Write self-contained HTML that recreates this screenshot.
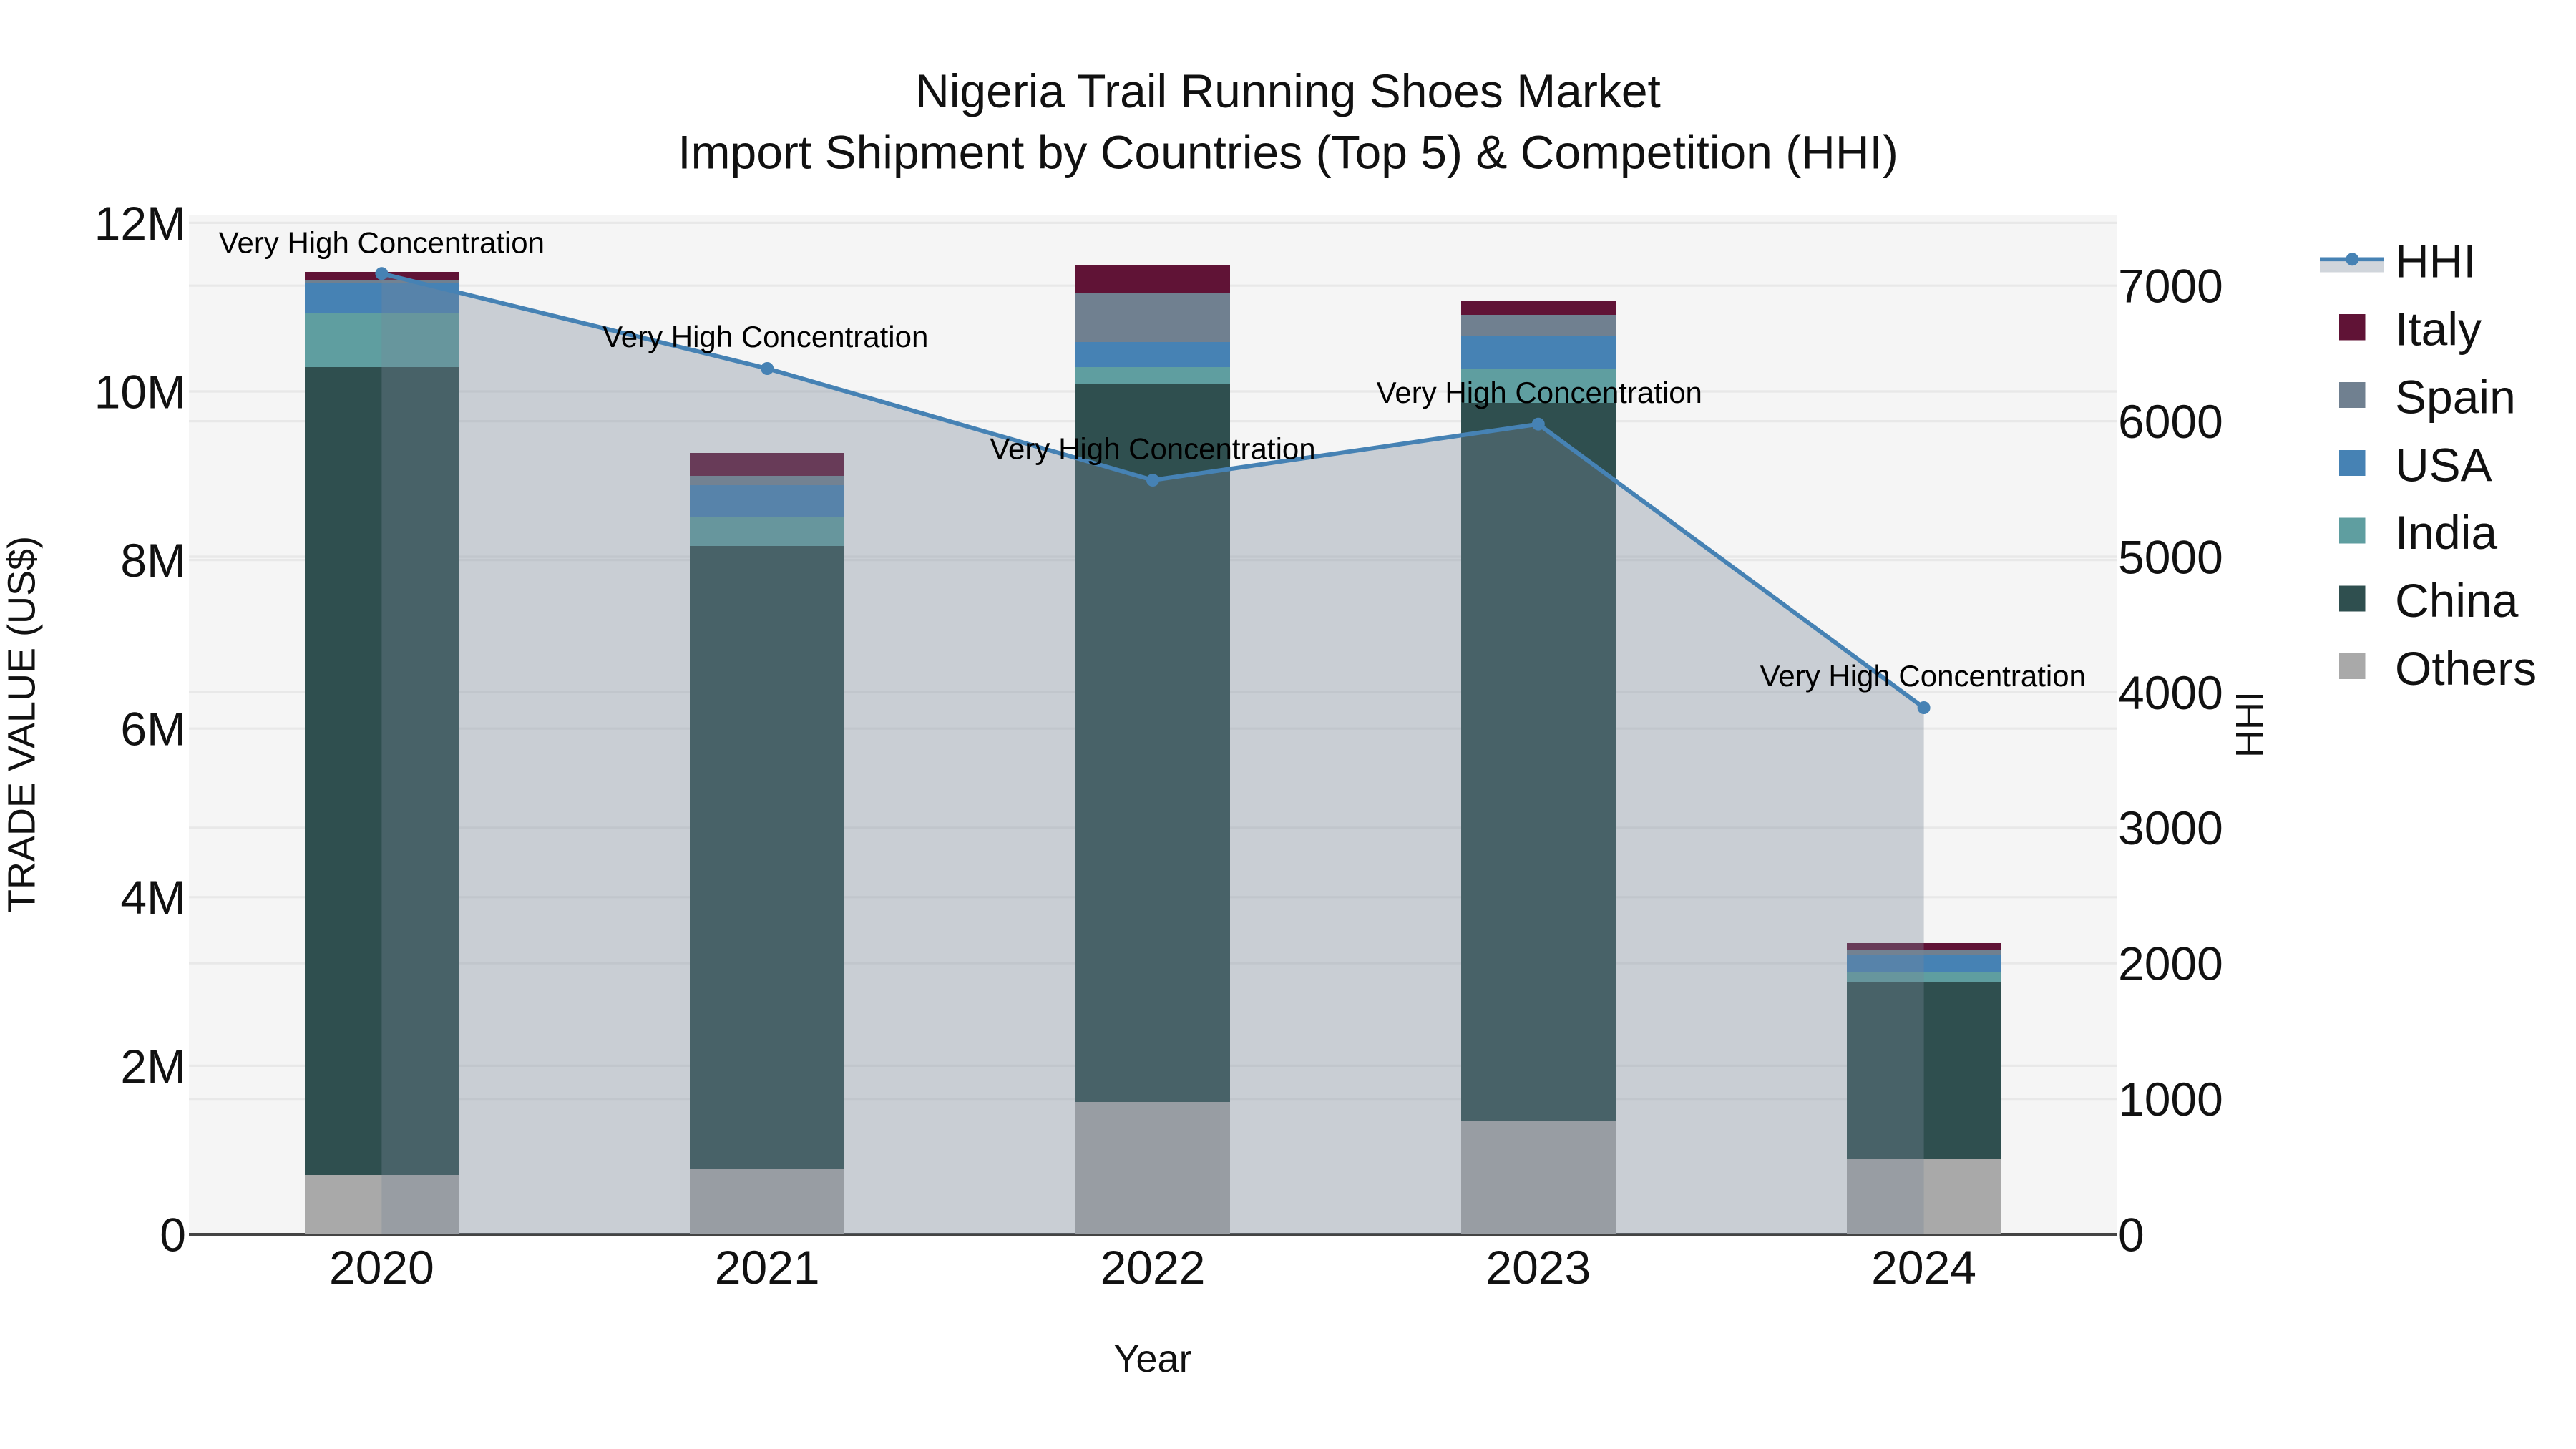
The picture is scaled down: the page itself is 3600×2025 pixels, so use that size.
<!DOCTYPE html>
<html lang="en">
<head>
<meta charset="utf-8">
<title>Nigeria Trail Running Shoes Market</title>
<style>
html,body{margin:0;padding:0;background:#fff;width:3600px;height:2025px;overflow:hidden}
svg{display:block}
text{font-family:"Liberation Sans",Arial,sans-serif;fill:#111}
.t{font-size:66px}
.a{font-size:54px}
.n{font-size:42px;fill:#000;text-anchor:middle}
.m{text-anchor:middle}
.e{text-anchor:end}
rect{shape-rendering:crispEdges}
</style>
</head>
<body>
<svg width="3600" height="2025" viewBox="0 0 3600 2025" xmlns="http://www.w3.org/2000/svg">
<rect x="0" y="0" width="3600" height="2025" fill="#fff"/>
<!-- plot background -->
<rect x="264" y="300" width="2694" height="1425" fill="#f5f5f5"/>
<!-- grid -->
<g stroke="#e8e8e8" stroke-width="3.2" fill="none">
<path d="M264 1489.4H2958M264 1253.8H2958M264 1018.2H2958M264 782.6H2958M264 547H2958M264 311.4H2958"/>
<path d="M264 1535.6H2958M264 1346.2H2958M264 1156.8H2958M264 967.4H2958M264 778H2958M264 588.6H2958M264 399.2H2958"/>
</g>
<!-- zero axis -->
<rect x="264" y="1723" width="2694" height="4" fill="#444"/>
<!-- bars 2020 -->
<g>
<rect x="426" y="1642" width="215" height="83" fill="#a9a9a9"/>
<rect x="426" y="513" width="215" height="1129" fill="#2f4f4f"/>
<rect x="426" y="437" width="215" height="76" fill="#5f9ea0"/>
<rect x="426" y="396" width="215" height="41" fill="#4682b4"/>
<rect x="426" y="392" width="215" height="4" fill="#708090"/>
<rect x="426" y="380" width="215" height="12" fill="#601336"/>
<!-- 2021 -->
<rect x="964" y="1633" width="216" height="92" fill="#a9a9a9"/>
<rect x="964" y="763" width="216" height="870" fill="#2f4f4f"/>
<rect x="964" y="722" width="216" height="41" fill="#5f9ea0"/>
<rect x="964" y="678" width="216" height="44" fill="#4682b4"/>
<rect x="964" y="665" width="216" height="13" fill="#708090"/>
<rect x="964" y="633" width="216" height="32" fill="#601336"/>
<!-- 2022 -->
<rect x="1503" y="1540" width="216" height="185" fill="#a9a9a9"/>
<rect x="1503" y="536" width="216" height="1004" fill="#2f4f4f"/>
<rect x="1503" y="513" width="216" height="23" fill="#5f9ea0"/>
<rect x="1503" y="478" width="216" height="35" fill="#4682b4"/>
<rect x="1503" y="409" width="216" height="69" fill="#708090"/>
<rect x="1503" y="371" width="216" height="38" fill="#601336"/>
<!-- 2023 -->
<rect x="2042" y="1567" width="216" height="158" fill="#a9a9a9"/>
<rect x="2042" y="563" width="216" height="1004" fill="#2f4f4f"/>
<rect x="2042" y="515" width="216" height="48" fill="#5f9ea0"/>
<rect x="2042" y="470" width="216" height="45" fill="#4682b4"/>
<rect x="2042" y="440" width="216" height="30" fill="#708090"/>
<rect x="2042" y="420" width="216" height="20" fill="#601336"/>
<!-- 2024 -->
<rect x="2581" y="1620" width="215" height="105" fill="#a9a9a9"/>
<rect x="2581" y="1372" width="215" height="248" fill="#2f4f4f"/>
<rect x="2581" y="1359" width="215" height="13" fill="#5f9ea0"/>
<rect x="2581" y="1335" width="215" height="24" fill="#4682b4"/>
<rect x="2581" y="1328" width="215" height="7" fill="#708090"/>
<rect x="2581" y="1318" width="215" height="10" fill="#601336"/>
</g>
<!-- HHI area -->
<path d="M533.4 382.3L1072.2 515L1611 671L2149.8 592.7L2688.6 989V1725H533.4Z" fill="rgb(119,136,153)" fill-opacity="0.35"/>
<!-- HHI line -->
<path d="M533.4 382.3L1072.2 515L1611 671L2149.8 592.7L2688.6 989" fill="none" stroke="#4682b4" stroke-width="6" stroke-linejoin="round"/>
<g fill="#4682b4">
<circle cx="533.4" cy="382.3" r="9"/>
<circle cx="1072.2" cy="515" r="9"/>
<circle cx="1611" cy="671" r="9"/>
<circle cx="2149.8" cy="592.7" r="9"/>
<circle cx="2688.6" cy="989" r="9"/>
</g>
<!-- annotations -->
<text class="n" x="533.4" y="353.5">Very High Concentration</text>
<text class="n" x="1069.7" y="485">Very High Concentration</text>
<text class="n" x="1611" y="641.5">Very High Concentration</text>
<text class="n" x="2151.3" y="563">Very High Concentration</text>
<text class="n" x="2687.3" y="959">Very High Concentration</text>
<!-- title -->
<text class="t m" x="1800" y="150">Nigeria Trail Running Shoes Market</text>
<text class="t m" x="1800" y="235.7">Import Shipment by Countries (Top 5) &amp; Competition (HHI)</text>
<!-- left ticks -->
<g class="t">
<text class="t e" x="260" y="335">12M</text>
<text class="t e" x="260" y="570.4">10M</text>
<text class="t e" x="260" y="806">8M</text>
<text class="t e" x="260" y="1041.6">6M</text>
<text class="t e" x="260" y="1277.2">4M</text>
<text class="t e" x="260" y="1512.8">2M</text>
<text class="t e" x="260" y="1748.4">0</text>
</g>
<!-- right ticks -->
<text class="t" x="2960" y="422.6">7000</text>
<text class="t" x="2960" y="612">6000</text>
<text class="t" x="2960" y="801.4">5000</text>
<text class="t" x="2960" y="990.8">4000</text>
<text class="t" x="2960" y="1180.2">3000</text>
<text class="t" x="2960" y="1369.6">2000</text>
<text class="t" x="2960" y="1559">1000</text>
<text class="t" x="2960" y="1748.4">0</text>
<!-- x ticks -->
<text class="t m" x="533.4" y="1794">2020</text>
<text class="t m" x="1072.2" y="1794">2021</text>
<text class="t m" x="1611" y="1794">2022</text>
<text class="t m" x="2149.8" y="1794">2023</text>
<text class="t m" x="2688.6" y="1794">2024</text>
<!-- axis titles -->
<text class="a m" x="1611" y="1917">Year</text>
<text class="a m" transform="translate(48.5 1012.5) rotate(-90)">TRADE VALUE (US$)</text>
<text class="a m" transform="translate(3162 1012.5) rotate(-90)">HHI</text>
<!-- legend -->
<rect x="3242" y="362" width="90" height="18.5" fill="rgb(119,136,153)" fill-opacity="0.35"/>
<path d="M3242 362.3H3332" stroke="#4682b4" stroke-width="5.6" fill="none"/>
<circle cx="3287.3" cy="362.3" r="9" fill="#4682b4"/>
<rect x="3269" y="439" width="36.5" height="36.3" fill="#601336"/>
<rect x="3269" y="534" width="36.5" height="36" fill="#708090"/>
<rect x="3269" y="629" width="36.5" height="36" fill="#4682b4"/>
<rect x="3269" y="723.5" width="36.5" height="36" fill="#5f9ea0"/>
<rect x="3269" y="818.5" width="36.5" height="36" fill="#2f4f4f"/>
<rect x="3269" y="913" width="36.5" height="36" fill="#a9a9a9"/>
<text class="t" x="3347" y="387.4">HHI</text>
<text class="t" x="3347" y="482.5">Italy</text>
<text class="t" x="3347" y="577.4">Spain</text>
<text class="t" x="3347" y="672.3">USA</text>
<text class="t" x="3347" y="767.2">India</text>
<text class="t" x="3347" y="862.1">China</text>
<text class="t" x="3347" y="957">Others</text>
</svg>
</body>
</html>
